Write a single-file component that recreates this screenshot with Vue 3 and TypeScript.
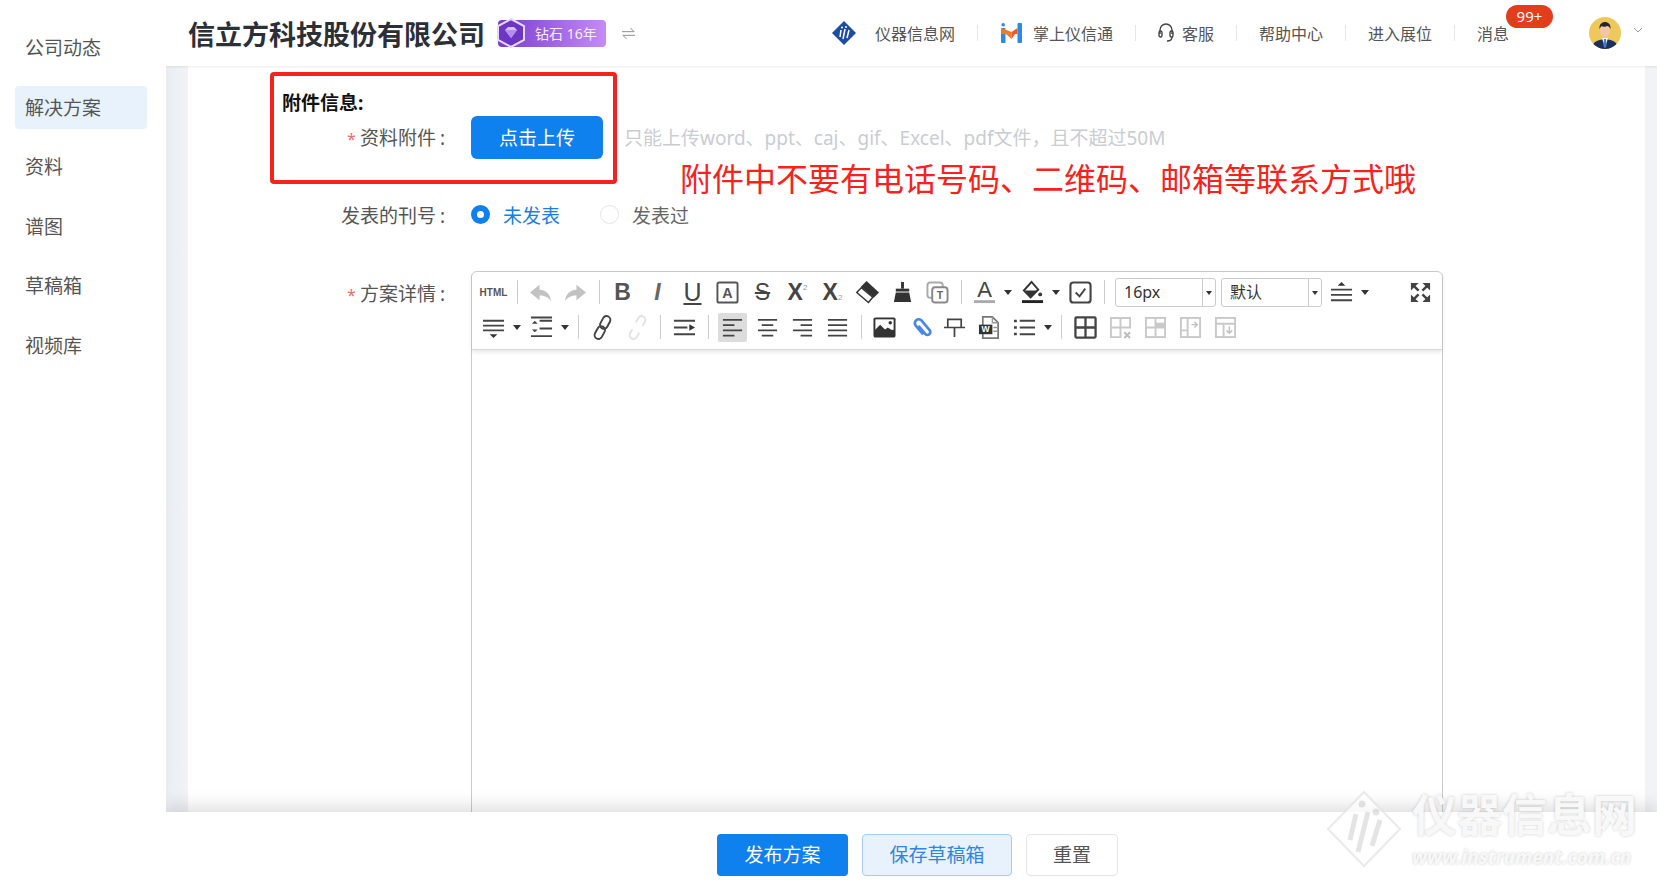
<script setup lang="ts">
interface ToolItem {
  sep?: boolean
  icon?: string
  text?: string
  sub?: string
  cls?: string
  caret?: boolean
  off?: boolean
  active?: boolean
  select?: string
}

const menus = ['公司动态', '解决方案', '资料', '谱图', '草稿箱', '视频库']

const d = 'fill="none" stroke="#444" stroke-width="2"'
const g = 'fill="none" stroke="#c9c9c9" stroke-width="2"'

const icons: Record<string, string> = {
  undo: '<path fill="#c2c2c2" d="M11 4 1 12l10 8v-5c5 0 9 1.500 12 6-1-7.500-5-11.500-12-12z"/>',
  redo: '<path fill="#c2c2c2" d="M13 4l10 8-10 8v-5c-5 0-9 1.500-12 6 1-7.500 5-11.500 12-12z"/>',
  abox: '<rect x="1.500" y="1.500" width="21" height="21" rx="2" fill="none" stroke="#555" stroke-width="2"/><text x="12" y="18" text-anchor="middle" font-size="15" font-weight="700" fill="#555" font-family="Liberation Sans">A</text>',
  eraser: '<path fill="#333" d="M11 0 24 12l-5.500 5.500L5 6z"/><path fill="#fff" stroke="#333" stroke-width="1.500" d="M5.500 7 17.500 17l-4.500 5.500L0.800 12z"/>',
  brush: '<rect x="10.500" y="1" width="3" height="7" fill="#333"/><rect x="5" y="8" width="14" height="3" fill="#333"/><path fill="#333" d="M5 12h14l2 10H3z"/>',
  tcopy: '<rect x="1.500" y="1.500" width="16" height="16" rx="3" fill="none" stroke="#aaa" stroke-width="2"/><rect x="6.500" y="6.500" width="16" height="16" rx="3" fill="#fff" stroke="#888" stroke-width="2"/><text x="14.500" y="19" text-anchor="middle" font-size="11" font-weight="700" fill="#666" font-family="Liberation Sans">T</text>',
  color: '<text x="12" y="17" text-anchor="middle" font-size="23" fill="#444" font-family="Liberation Sans">A</text><rect x="1" y="20" width="22" height="3" fill="#aaa"/>',
  bucket: '<path fill="none" stroke="#333" stroke-width="2" d="M11 1 3 10l7 7 8-8z"/><path fill="#333" d="M4 10h13l-7 7z"/><circle cx="20" cy="14" r="2" fill="#333"/><rect x="1" y="20" width="22" height="3" fill="#222"/>',
  check: `<rect x="1.500" y="1.500" width="21" height="21" rx="3" fill="none" stroke="#444" stroke-width="2.200"/><path ${d} d="m7 12 4 4 6-8"/>`,
  lineh: `<path fill="#333" d="m12 1 4 4H8z"/><path ${d} d="M1 9h22M1 14.500h22M1 20h22"/>`,
  full: '<path fill="#444" d="M2 2h8L2 10zM22 2v8l-8-8zM2 22v-8l8 8zM22 22h-8l8-8z"/><path stroke="#444" stroke-width="2.600" d="m5 5 5 5M19 5l-5 5M5 19l5-5M19 19l-5-5"/>',
  para: `<path ${d} d="M1 5h22M1 10h22M1 15h22"/><path fill="#333" d="m8 19 8 0-4 4z"/>`,
  rowh: `<path ${d} d="M10 5h13M10 13h13M1 21h22M1 1.500h22"/><path fill="#444" d="m5 5 3 3H2zM5 17l3-3H2z"/>`,
  link: '<g fill="none" stroke="#444" stroke-width="2" transform="rotate(-62 12 12)"><rect x="-1" y="8" width="14" height="8" rx="4"/><rect x="11" y="8" width="14" height="8" rx="4"/></g>',
  unlink: '<g fill="none" stroke="#e2e2e2" stroke-width="2" transform="rotate(-62 12 12)"><path d="M8 8H3a4 4 0 0 0 0 8h5"/><path d="M16 8h5a4 4 0 0 1 0 8h-5"/></g>',
  indent: `<path ${d} d="M1 5h22M1 12h14M1 19h22"/><path fill="#333" d="m23 12-6-3.500v7z"/>`,
  left: `<path ${d} d="M2 4h20M2 9.500h12M2 15h20M2 20.500h12"/>`,
  center: `<path ${d} d="M2 4h20M6 9.500h12M2 15h20M6 20.500h12"/>`,
  right: `<path ${d} d="M2 4h20M10 9.500h12M2 15h20M10 20.500h12"/>`,
  justify: `<path ${d} d="M2 4h20M2 9.500h20M2 15h20M2 20.500h20"/>`,
  image: '<rect x="0.500" y="1.500" width="23" height="21" rx="2" fill="#333"/><rect x="2.500" y="3.500" width="19" height="11" fill="#fff"/><circle cx="18" cy="7" r="1.800" fill="#333"/><path fill="#333" d="M2.500 14l5-5 5 5 3-2 6 4v3h-19z"/>',
  clip: '<g fill="none" stroke="#4a86e8" stroke-width="2.800" transform="translate(3 0) rotate(-40 12 12)"><path d="M8 18V6a4 4 0 0 1 8 0v13a3 3 0 0 1-6 0V8"/></g>',
  hr: `<path fill="none" stroke="#444" stroke-width="1.800" d="M5 12V3.500h14V12M1 12h22M12 12v10"/>`,
  word: '<path fill="#fff" stroke="#777" stroke-width="1.800" d="M5 1h10l6 6v16H5z"/><path fill="none" stroke="#999" stroke-width="1.500" d="M15 1v6h6M16 12h4M16 16h4"/><rect x="1" y="9" width="14" height="10" fill="#333"/><text x="8" y="17" text-anchor="middle" font-size="9" font-weight="700" fill="#fff" font-family="Liberation Sans">W</text>',
  list: `<path ${d} d="M7 5h16M7 12h16M7 19h16"/><path fill="#444" d="M1 4h3v2.500H1zM1 10.800h3v2.500H1zM1 17.500h3V20H1z"/>`,
  table: '<rect x="1.500" y="1.500" width="21" height="21" rx="1" fill="none" stroke="#444" stroke-width="2.400"/><path fill="none" stroke="#444" stroke-width="2.400" d="M12 2v20M2 12h20"/>',
  tbl1: `<path ${g} d="M22 13V2H2v20h11M12 2v20M2 12h20"/><path fill="none" stroke="#bbb" stroke-width="2" d="m16 17 6 6M22 17l-6 6"/>`,
  tbl2: `<rect x="2" y="2" width="20" height="20" ${g}/><path ${g} d="M12 2v20M2 12h20"/><rect x="12" y="7" width="10" height="5" fill="#c9c9c9"/>`,
  tbl3: `<rect x="2" y="2" width="20" height="20" ${g}/><path ${g} d="M9 2v20M2 15h7"/><path fill="none" stroke="#c0c0c0" stroke-width="1.500" d="M13 9h6m-3-3 3 3-3 3"/>`,
  tbl4: `<rect x="2" y="2" width="20" height="20" ${g}/><path ${g} d="M2 8h20M10 8v14"/><path fill="none" stroke="#c0c0c0" stroke-width="1.500" d="M16 11v7m-3-3 3 3 3-3"/>`
}

const row1: ToolItem[] = [
  { text: 'HTML', cls: 'html' },
  { sep: true },
  { icon: 'undo' },
  { icon: 'redo' },
  { sep: true },
  { text: 'B', cls: 'bold' },
  { text: 'I', cls: 'ital' },
  { text: 'U', cls: 'under' },
  { icon: 'abox' },
  { text: 'S', cls: 'strike' },
  { text: 'X', sub: '2', cls: 'sup' },
  { text: 'X', sub: '2', cls: 'subs' },
  { icon: 'eraser' },
  { icon: 'brush' },
  { icon: 'tcopy' },
  { sep: true },
  { icon: 'color', caret: true },
  { icon: 'bucket', caret: true },
  { icon: 'check' },
  { sep: true },
  { select: '16px' },
  { select: '默认' },
  { icon: 'lineh', caret: true },
  { icon: 'full', cls: 'push' }
]

const row2: ToolItem[] = [
  { icon: 'para', caret: true },
  { icon: 'rowh', caret: true },
  { sep: true },
  { icon: 'link' },
  { icon: 'unlink' },
  { sep: true },
  { icon: 'indent' },
  { sep: true },
  { icon: 'left', active: true },
  { icon: 'center' },
  { icon: 'right' },
  { icon: 'justify' },
  { sep: true },
  { icon: 'image' },
  { icon: 'clip' },
  { icon: 'hr' },
  { icon: 'word' },
  { icon: 'list', caret: true },
  { sep: true },
  { icon: 'table' },
  { icon: 'tbl1' },
  { icon: 'tbl2' },
  { icon: 'tbl3' },
  { icon: 'tbl4' }
]
</script>

<template>
  <div class="page">
    <aside class="sidebar">
      <div
        v-for="(m, i) in menus"
        :key="m"
        :class="['menu-item', { active: i === 1 }]"
      >{{ m }}</div>
    </aside>

    <div class="main">
      <header class="topbar">
        <h1 class="company">信立方科技股份有限公司</h1>
        <div class="level">
          <svg class="gem" viewBox="0 0 30 30">
            <path d="M15 1 28 8v14l-13 7-13-7V8z" fill="#6d35c4" stroke="#e6dafb" stroke-width="2" />
            <path d="M9 12l3-3h6l3 3-6 8z" fill="#d6bdfb" />
            <path d="M9 12h12l-6 8z" fill="#b48cf2" />
          </svg>
          <span>钻石 16年</span>
        </div>
        <svg class="swap" viewBox="0 0 16 14" fill="none" stroke="#888" stroke-width="1">
          <path d="M1 5h13L10 1M15 9H2l4 4" />
        </svg>

        <nav class="top-nav">
          <span class="nav-item">
            <svg class="logo-a" viewBox="0 0 24 24">
              <path d="M12 0 24 12 12 24 0 12z" fill="#1b4ea3" />
              <path d="M9 9 8 16M13 8 11 18M17 9l-2 8" stroke="#fff" stroke-width="1.500" fill="none" />
              <circle cx="10" cy="6.500" r="1" fill="#fff" />
              <circle cx="14" cy="6" r="1" fill="#fff" />
            </svg>
            仪器信息网
          </span>
          <i class="nav-sep"></i>
          <span class="nav-item">
            <svg class="logo-m" viewBox="0 0 21 20">
              <rect x="0" y="5" width="4.500" height="15" rx="1" fill="#2b8ae6" />
              <rect x="16.500" y="0" width="4.500" height="20" rx="1" fill="#2b8ae6" />
              <circle cx="2.200" cy="1.800" r="1.800" fill="#2b8ae6" />
              <path d="M0 5l10.500 4v7L5 11H0z" fill="#ef7a2c" />
              <path d="M16.500 5l-6 4v7L14 11h2.500z" fill="#ef5a2c" />
            </svg>
            掌上仪信通
          </span>
          <i class="nav-sep"></i>
          <span class="nav-item">
            <svg class="headset" viewBox="0 0 16 20" fill="none" stroke="#444" stroke-width="1.400">
              <path d="M2 11V7a6 6 0 0 1 12 0v4" />
              <rect x="1" y="8" width="3" height="6" rx="1.500" />
              <rect x="12" y="8" width="3" height="6" rx="1.500" />
              <path d="M14 14c0 3-2 4-5 4" />
            </svg>
            客服
          </span>
          <i class="nav-sep"></i>
          <span class="nav-item">帮助中心</span>
          <i class="nav-sep"></i>
          <span class="nav-item">进入展位</span>
          <i class="nav-sep"></i>
          <span class="nav-item msg">
            消息
            <b class="msg-count">99+</b>
          </span>
        </nav>

        <svg class="avatar" viewBox="0 0 32 32">
          <defs>
            <clipPath id="av"><circle cx="16" cy="16" r="16" /></clipPath>
          </defs>
          <g clip-path="url(#av)">
            <rect width="32" height="32" fill="#eec95a" />
            <path d="M3 32c0-7 5-9 13-10 8 1 13 3 13 10z" fill="#1f2f5c" />
            <path d="M13 21h6l-3 10z" fill="#fff" />
            <path d="M15 22h2l.6 7-1.600 2-1.600-2z" fill="#3f7bd0" />
            <ellipse cx="16" cy="14" rx="5" ry="6.500" fill="#f2c6a6" />
            <path d="M10.500 12c-.5-5 2.500-7 5.500-7s6 2 5.500 7c-1-2-2-3-3-3-2 1-5 1-6 0-1 1-1.500 2-2 3z" fill="#22262f" />
          </g>
        </svg>
        <svg class="chev" viewBox="0 0 10 6" fill="none" stroke="#999" stroke-width="1">
          <path d="m1 1 4 4 4-4" />
        </svg>
      </header>

      <div class="content">
        <div class="form">
          <div class="group-title">附件信息:</div>
          <div class="form-row upload-row">
            <label class="form-label"><em>*</em>资料附件<span class="colon">:</span></label>
            <button class="btn-primary upload">点击上传</button>
            <span class="hint">只能上传word、ppt、caj、gif、Excel、pdf文件，且不超过50M</span>
          </div>
          <div class="form-row radio-row">
            <label class="form-label">发表的刊号<span class="colon">:</span></label>
            <span class="radio on"></span>
            <span class="radio-text on">未发表</span>
            <span class="radio"></span>
            <span class="radio-text">发表过</span>
          </div>
          <div class="form-row editor-row">
            <label class="form-label"><em>*</em>方案详情<span class="colon">:</span></label>
            <div class="editor">
              <div class="toolbar">
                <div v-for="(row, r) in [row1, row2]" :key="r" class="tool-row">
                  <template v-for="(it, i) in row" :key="i">
                    <i v-if="it.sep" class="tool-sep"></i>
                    <div v-else-if="it.select" class="tool-select">
                      <span class="sel-value">{{ it.select }}</span>
                      <span class="sel-arrow"></span>
                    </div>
                    <span v-else :class="['tool', it.cls, { 'with-caret': it.caret, active: it.active }]">
                      <span class="tool-face">
                        <svg v-if="it.icon" viewBox="0 0 24 24" v-html="icons[it.icon]"></svg>
                        <template v-else>{{ it.text }}<small v-if="it.sub">{{ it.sub }}</small></template>
                      </span>
                      <i v-if="it.caret" class="caret"></i>
                    </span>
                  </template>
                </div>
              </div>
            </div>
          </div>

          <!-- 标注：截图上后加的红框和提示文字 -->
          <div class="mark-box"></div>
          <div class="mark-text">附件中不要有电话号码、二维码、邮箱等联系方式哦</div>
        </div>
      </div>

      <footer class="footer">
        <button class="btn-primary foot">发布方案</button>
        <button class="btn-light foot">保存草稿箱</button>
        <button class="btn-plain foot">重置</button>
      </footer>
    </div>

    <div class="watermark">
      <svg viewBox="0 0 76 78" fill="none">
        <path d="M38 2 74 39 38 76 2 39z" fill="#fff" stroke="#e4e4e4" stroke-width="2" />
        <path d="M30 24 24 50M42 22 32 62M54 30 46 56" stroke="#dcdcdc" stroke-width="5" />
        <circle cx="36" cy="14" r="3.500" fill="#dcdcdc" />
        <circle cx="50" cy="22" r="3.500" fill="#dcdcdc" />
      </svg>
      <div class="wm-text">
        <div class="wm-cn">仪器信息网</div>
        <div class="wm-en">www.instrument.com.cn</div>
      </div>
    </div>
  </div>
</template>

<style scoped>
.page {
  position: relative;
  display: flex;
  height: 883px;
  overflow: hidden;
  font-family: "Noto Sans", "Noto Sans CJK SC", sans-serif;
  color: #555;
  background: #fff;
}

.sidebar {
  position: relative;
  z-index: 3;
  width: 166px;
  flex: none;
  padding: 26px 19px 0 15px;
  box-sizing: border-box;
  background: #fff;
}

.menu-item {
  height: 43px;
  margin-bottom: 16.6px;
  padding-left: 10px;
  line-height: 45px;
  font-size: 19px;
  border-radius: 4px;
  color: #555;
}

.menu-item.active {
  background: #e7f2fd;
}

.main {
  flex: 1;
  min-width: 0;
  display: flex;
  flex-direction: column;
}

.topbar {
  position: relative;
  z-index: 2;
  flex: none;
  height: 66px;
  display: flex;
  align-items: center;
  padding: 0 14px 0 22px;
  background: #fff;
  box-shadow: 0 1px 2px rgba(0, 0, 0, 0.08);
}

.company {
  margin: 0;
  font-size: 27px;
  font-weight: 700;
  color: #2b2f36;
}

.level {
  display: flex;
  align-items: center;
  height: 27px;
  width: 108px;
  margin-left: 13px;
  border-radius: 4px;
  background: linear-gradient(90deg, #7a3ccf, #c58bf7);
  color: #f5edff;
  font-size: 14px;
}

.gem {
  width: 30px;
  height: 30px;
  margin: 0 9px 0 -2px;
}

.swap {
  width: 15px;
  height: 13px;
  margin-left: 15px;
}

.top-nav {
  display: flex;
  align-items: center;
  margin-left: auto;
  font-size: 16px;
}

.nav-item {
  position: relative;
  display: flex;
  align-items: center;
}

.nav-sep {
  width: 1px;
  height: 16px;
  margin: 0 22px;
  background: #e4e6ea;
}

.logo-a {
  width: 24px;
  height: 24px;
  margin-right: 19px;
}

.logo-m {
  width: 21px;
  height: 20px;
  margin: 0 11px 0 1px;
}

.headset {
  width: 16px;
  height: 20px;
  margin-right: 8px;
}

.msg-count {
  position: absolute;
  left: 29px;
  top: -16px;
  width: 47px;
  height: 23px;
  line-height: 23px;
  text-align: center;
  border-radius: 12px;
  background: #e43d1c;
  color: #fff;
  font-size: 15px;
  font-weight: 400;
}

.avatar {
  width: 32px;
  height: 32px;
  margin-left: 80px;
}

.chev {
  width: 10px;
  height: 6px;
  margin-left: 12px;
  margin-top: -6px;
}

.content {
  flex: 1;
  min-height: 0;
  overflow: hidden;
  padding: 0 12px 0 22px;
  background: linear-gradient(90deg, #e9ecf1 0, #f1f3f7 22px);
}

.form {
  position: relative;
  height: 100%;
  padding: 24px 0 0 94px;
  box-sizing: border-box;
  background: #fff;
}

.group-title {
  height: 24px;
  margin-top: 1px;
  line-height: 24px;
  font-size: 19px;
  font-weight: 700;
  color: #111;
}

.form-row {
  display: flex;
  align-items: center;
}

.form-label {
  flex: none;
  width: 163px;
  margin-right: 26px;
  text-align: right;
  font-size: 19px;
  color: #555;
}

.form-label em {
  margin-right: 4px;
  font-style: normal;
  font-size: 16px;
  color: #f56c6c;
}

.colon {
  margin-left: 4px;
}

.upload-row {
  margin-top: 0.5px;
}

.btn-primary {
  border: none;
  background: #0f81ee;
  color: #fff;
  font-family: inherit;
  border-radius: 6px;
}

.upload {
  width: 132px;
  height: 43px;
  font-size: 19px;
}

.hint {
  margin-left: 21px;
  font-size: 19px;
  color: #c9cdd2;
}

.radio-row {
  height: 30px;
  margin-top: 41px;
}

.radio {
  width: 19px;
  height: 19px;
  box-sizing: border-box;
  border: 1px solid #e2e5e9;
  border-radius: 50%;
  background: #fff;
}

.radio.on {
  border: 6px solid #0f81ee;
}

.radio-text {
  margin: 0 40px 0 13px;
  font-size: 19px;
  color: #666;
}

.radio-text.on {
  color: #1a7fdd;
}

.editor-row {
  align-items: flex-start;
  margin-top: 41px;
}

.editor-row .form-label {
  margin-top: 8px;
}

.editor {
  width: 972px;
  height: 640px;
  flex: none;
  box-sizing: border-box;
  border: 1px solid #ccc;
  border-radius: 6px 6px 0 0;
}

.toolbar {
  height: 78px;
  box-sizing: border-box;
  padding: 3px 4px 0;
  border-bottom: 1px solid #d8d8d8;
  box-shadow: 0 2px 4px rgba(0, 0, 0, 0.1);
}

.tool-row {
  display: flex;
  align-items: center;
  height: 35px;
}

.tool {
  display: flex;
  align-items: center;
  flex: none;
  width: 35px;
  height: 35px;
  color: #444;
  font-family: "Liberation Sans", sans-serif;
}

.tool.with-caret {
  width: 48px;
}

.tool.push {
  margin-left: auto;
}

.tool-face {
  position: relative;
  width: 35px;
  height: 35px;
  display: flex;
  align-items: center;
  justify-content: center;
  flex: none;
}

.tool-face svg {
  width: 23px;
  height: 23px;
  overflow: visible;
}

.tool.active .tool-face::before {
  content: "";
  position: absolute;
  left: 3px;
  top: 3px;
  right: 3px;
  bottom: 3px;
  border-radius: 2px;
  background: #dcdcdc;
}

.tool.active svg {
  position: relative;
}

.caret {
  margin-left: 2px;
  border: 4px solid transparent;
  border-top: 5px solid #333;
  border-bottom: 0;
}

.html {
  font-size: 10px;
  font-weight: 700;
  color: #555;
}

.bold {
  font-size: 23px;
  font-weight: 700;
  color: #555;
}

.ital {
  font-size: 23px;
  font-weight: 700;
  font-style: italic;
  color: #666;
}

.under .tool-face {
  font-size: 25px;
  text-decoration: underline;
  text-underline-offset: 2px;
}

.strike .tool-face {
  font-size: 23px;
  text-decoration: line-through;
}

.sup,
.subs {
  font-size: 23px;
  font-weight: 700;
  color: #444;
}

.sup small,
.subs small {
  font-size: 8px;
  font-weight: 400;
  color: #999;
  align-self: flex-start;
  margin-top: 8px;
}

.subs small {
  align-self: flex-end;
  margin: 0 0 8px;
}

.tool-sep {
  flex: none;
  width: 1px;
  height: 24px;
  margin: 0 5.5px;
  background: #ccc;
}

.tool-row + .tool-row .tool-sep {
  margin: 0 5.8px;
}

.tool-select {
  display: flex;
  flex: none;
  width: 101px;
  height: 29px;
  margin-right: 5px;
  box-sizing: border-box;
  border: 1px solid #ccc;
  border-radius: 3px;
  font-family: "Noto Sans", "Noto Sans CJK SC", sans-serif;
  font-size: 16px;
  color: #333;
}

.tool-sep + .tool-select {
  margin-left: 5px;
}

.tool-select + .tool {
  margin-left: -3px;
}

.sel-value {
  flex: 1;
  padding-left: 8px;
  line-height: 27px;
}

.sel-arrow {
  position: relative;
  width: 12px;
  border-left: 1px solid #ccc;
}

.sel-arrow::after {
  content: "";
  position: absolute;
  left: 3px;
  top: 12px;
  border: 3.5px solid transparent;
  border-top: 4px solid #333;
  border-bottom: 0;
}

.footer {
  position: relative;
  z-index: 2;
  flex: none;
  height: 71px;
  box-sizing: border-box;
  display: flex;
  align-items: flex-start;
  padding: 22px 0 0 551px;
  gap: 14px;
  background: #fff;
  box-shadow: 0 -6px 16px rgba(0, 0, 0, 0.13);
}

.foot {
  height: 42px;
  font-size: 19px;
  line-height: 38px;
  font-family: inherit;
  border-radius: 4px;
}

.btn-primary.foot {
  width: 131px;
}

.btn-light {
  width: 150px;
  border: 1px solid #a6cdf0;
  background: #e7f2fd;
  color: #2f86dc;
}

.btn-plain {
  width: 92px;
  border: 1px solid #e3e6ea;
  background: #fff;
  color: #555;
}

.mark-box {
  position: absolute;
  left: 82px;
  top: 6px;
  width: 347px;
  height: 112px;
  box-sizing: border-box;
  border: 4px solid #f5231c;
  border-radius: 4px;
}

.mark-text {
  position: absolute;
  left: 492px;
  top: 91px;
  font-size: 32px;
  line-height: 44px;
  color: #f5231c;
  white-space: nowrap;
}

.watermark {
  position: absolute;
  z-index: 3;
  left: 1326px;
  top: 790px;
  display: flex;
  pointer-events: none;
}

.watermark svg {
  width: 76px;
  height: 78px;
  opacity: 0.75;
}

.wm-text {
  margin-left: 10px;
  color: #f8f8f8;
  text-shadow: 0 0 3px rgba(0, 0, 0, 0.2);
}

.wm-cn {
  font-size: 45px;
  line-height: 50px;
  font-weight: 700;
  white-space: nowrap;
}

.wm-en {
  margin-top: 6px;
  font-size: 19px;
  line-height: 22px;
  font-weight: 700;
  font-style: italic;
  white-space: nowrap;
}
</style>

<style>
body {
  margin: 0;
  overflow: hidden;
}
</style>
